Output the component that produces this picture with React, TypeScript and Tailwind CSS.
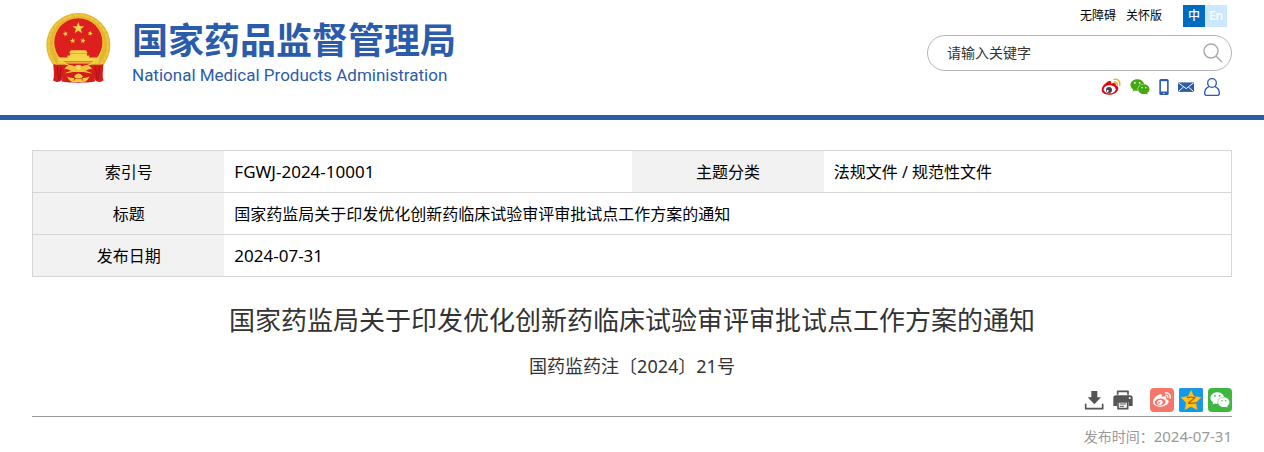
import type { ReactNode } from 'react';
import { FaWeibo, FaWeixin } from 'react-icons/fa';

type IconLink = {
  label: string;
  icon: ReactNode;
};

const NOTICE_TITLE = '国家药监局关于印发优化创新药临床试验审评审批试点工作方案的通知';

const STAR = 'M0 -10 L2.4 -3.2 L9.5 -3.1 L3.9 1.2 L5.9 8.1 L0 4 L-5.9 8.1 L-3.9 1.2 L-9.5 -3.1 L-2.4 -3.2 Z';

function Emblem() {
  return (
    <svg viewBox="45 38 201 212" className="h-[70px] w-[67px] shrink-0" role="img" aria-label="国徽">
      <circle cx="145" cy="135" r="97" fill="#e5b52d" />
      <circle cx="145" cy="135" r="90" fill="none" stroke="#efc843" strokeWidth="6" strokeDasharray="14 3" />
      <circle cx="145" cy="129" r="76" fill="#f2ca3f" />
      <circle cx="145" cy="127" r="73" fill="#dd1f1d" />
      <g fill="#f6d34a">
        <path d={STAR} transform="translate(145 84) scale(1.9)" />
        <path d={STAR} transform="translate(106 101) rotate(-15) scale(.85)" />
        <path d={STAR} transform="translate(181 100) rotate(15) scale(.85)" />
        <path d={STAR} transform="translate(128 122) rotate(-8) scale(.9)" />
        <path d={STAR} transform="translate(159 122) rotate(8) scale(.9)" />
        <path d="M122 151h46l5 8h-56zM120 160h51v9h-51zM112 167h66v6h-66zM84 173h123v12H84zM80 187h130l-5 4H85z" />
      </g>
      <path d="M69 193c22 4 36-2 47 5l17 10-28 12-10 20c-9 10-21 7-27 2 5-9 3-23 1-49z" fill="#d51b1b" />
      <path d="M221 193c-22 4-36-2-47 5l-17 10 28 12 10 20c9 10 21 7 27 2-5-9-3-23-1-49z" fill="#d51b1b" />
      <path d="M101 222l34-6h20l34 6 7 23c-16 4-29 4-51 4s-35 0-51-4z" fill="#d51b1b" />
      <path d="M82 199q-2 20 4 43M94 201q-5 13-4 38M208 199q2 20-4 43M196 201q5 13 4 38" fill="none" stroke="#a81014" strokeWidth="3" />
      <path d="M102 209c9-15 23-17 32-7 2-10 20-10 22 0 9-10 23-8 32 7-14-5-19 8-32 8h-22c-13 0-18-13-32-8z" fill="#edc33b" />
      <circle cx="145" cy="203" r="7" fill="#f7dc62" />
      <path d="M132 230q13-18 27 0l-6 6h-15zM111 230q14 6 22 5l-4 12q-11-1-18-17zM179 230q-14 6-22 5l4 12q11-1 18-17zM135 238h20l6 9h-32z" fill="#f1c93f" />
    </svg>
  );
}

function WeiboColorIcon() {
  return (
    <svg viewBox="34 20 60 54" className="h-[18px] w-5">
      <path d="M57 30c5-3 10-1 7 7 8-4 17-3 14 5 8 3 9 8 7 13-4 10-15 15-27 15-13 0-22-6-22-14C36 46 48 34 57 30z" fill="#e60012" />
      <ellipse cx="60" cy="54" rx="18" ry="12" fill="#fff" />
      <circle cx="58" cy="56" r="9" fill="#444" />
      <circle cx="54" cy="59" r="3" fill="#fff" />
      <path d="M73 24c11-3 20 6 17 18M73 32c6-1 11 3 10 9" fill="none" stroke="#eaa91c" strokeWidth="4" strokeLinecap="round" />
    </svg>
  );
}

function PhoneIcon() {
  return (
    <svg viewBox="203 18 31 54" className="h-[18px] w-[10px]">
      <rect x="204" y="20" width="29" height="50" rx="5" fill="#2b5caa" />
      <path d="M209 27h19v32h-19z" fill="#fff" />
      <circle cx="218" cy="65" r="2" fill="#fff" />
    </svg>
  );
}

function MailIcon() {
  return (
    <svg viewBox="260 18 49 54" className="h-[18px] w-4">
      <path d="M260 31h49v29h-49z" fill="#2b5caa" />
      <path d="M261 32l24 18 23-18M261 59l16-14M308 59l-16-14" fill="none" stroke="#fff" strokeWidth="3" />
    </svg>
  );
}

function UserIcon() {
  return (
    <svg viewBox="339 17 54 54" className="h-[18px] w-[18px]" fill="none" stroke="#2b5caa" strokeWidth="4">
      <circle cx="366" cy="32" r="13" />
      <path d="M357 43c-9 4-13 12-13 20 0 5 2 6 5 6h34c3 0 5-1 5-6 0-8-4-16-13-20" />
    </svg>
  );
}

function DownloadIcon() {
  return (
    <svg viewBox="42 29 60 60" className="h-5 w-5" fill="#555">
      <path d="M64 32h18v19h11L73 72 53 51h11z" />
      <path d="M47 72v13h51V72" fill="none" stroke="#555" strokeWidth="5" strokeLinecap="round" strokeLinejoin="round" />
    </svg>
  );
}

function PrintIcon() {
  return (
    <svg viewBox="131 31 60 60" className="h-5 w-5">
      <path d="M145 45V35h31v10" fill="none" stroke="#555" strokeWidth="5" strokeLinejoin="round" />
      <path d="M139 47h43q8 0 8 8v24h-12V67h-35v12h-11V55q0-8 7-8z" fill="#555" />
      <circle cx="181" cy="55" r="3" fill="#fff" />
      <path d="M146 67h29v20h-29z" fill="#fff" stroke="#555" strokeWidth="5" strokeLinejoin="round" />
      <path d="M151 73h19M151 80h13" stroke="#555" strokeWidth="3" />
    </svg>
  );
}

function QzoneIcon() {
  return (
    <svg viewBox="0 0 72 72" className="h-6 w-6">
      <rect x="1" y="1" width="70" height="70" rx="4" fill="#0c9bef" stroke="#0879c9" strokeWidth="2" />
      <path
        d="M36 6l9 19 22 3-16 16 4 22-19-10-19 10 4-22L5 28l22-3z"
        fill="#fdc51c"
        stroke="#e88b0e"
        strokeWidth="1"
        strokeLinejoin="round"
      />
      <path d="M24 29c9-2 16-2 24 0L28 45c8 2 15 2 24-1" fill="none" stroke="#c65d08" strokeWidth="4" strokeLinejoin="round" />
    </svg>
  );
}

const HEADER_LINKS: IconLink[] = [
  { label: '微博', icon: <WeiboColorIcon /> },
  { label: '微信', icon: <FaWeixin className="h-[18px] w-5 text-[#45a813]" /> },
  { label: '手机', icon: <PhoneIcon /> },
  { label: '邮箱', icon: <MailIcon /> },
  { label: '用户', icon: <UserIcon /> },
];

function Header() {
  return (
    <header className="flex items-start justify-between border-b-[5px] border-[#2b5caa] pr-8 pb-[19px] pl-[45px]">
      <a href="#" className="flex gap-5 pt-[13px] text-[#2b5caa]">
        <Emblem />
        <span className="flex flex-col pt-1">
          <span className="text-[36px] leading-[48px] font-bold whitespace-nowrap">国家药品监督管理局</span>
          <span className="font-['Roboto',sans-serif] text-[17px] leading-5 whitespace-nowrap">
            National Medical Products Administration
          </span>
        </span>
      </a>

      <div className="flex w-[305px] flex-col pt-[5px]">
        <nav className="flex items-center justify-end pr-[5px] text-xs leading-[22px]">
          <a href="#" className="mr-[10px]">无障碍</a>
          <a href="#" className="mr-[21px]">关怀版</a>
          <a href="#" className="h-[22px] w-[22px] bg-[#006cbf] text-center font-medium text-white">中</a>
          <a href="#" className="h-[22px] w-[22px] bg-[#cce8ff] text-center font-medium text-white">En</a>
        </nav>
        <form className="mt-2 flex h-9 items-center rounded-full border border-[#b5b5b5] pr-2 pl-[19px]" onSubmit={event => event.preventDefault()}>
          <input
            type="text"
            aria-label="搜索"
            placeholder="请输入关键字"
            className="min-w-0 flex-1 text-sm outline-none placeholder:text-[#333]"
          />
          <button type="submit" aria-label="搜索">
            <svg viewBox="0 0 40 40" className="h-5 w-5" fill="none" stroke="#aaa" strokeWidth="3">
              <circle cx="16" cy="16" r="14" />
              <path d="M26 26l12 12" />
            </svg>
          </button>
        </form>
        <div className="mt-[7px] flex items-center justify-end gap-[9px] pr-[11px]">
          {HEADER_LINKS.map(link => (
            <a key={link.label} href="#" aria-label={link.label}>
              {link.icon}
            </a>
          ))}
        </div>
      </div>
    </header>
  );
}

function InfoTable() {
  const labelClass = 'w-[16%] bg-[#f2f2f2] text-center font-normal';
  const valueClass = 'px-[10px]';

  return (
    <table className="w-full table-fixed border-collapse border border-[#d6d6d6] text-base leading-6">
      <tbody>
        <tr className="h-[42px] border-b border-[#d6d6d6]">
          <th scope="row" className={labelClass}>索引号</th>
          <td className={`w-[34%] text-[17px] ${valueClass}`}>FGWJ-2024-10001</td>
          <th scope="row" className={labelClass}>主题分类</th>
          <td className={valueClass}>法规文件 / 规范性文件</td>
        </tr>
        <tr className="h-[42px] border-b border-[#d6d6d6]">
          <th scope="row" className={labelClass}>标题</th>
          <td colSpan={3} className={valueClass}>{NOTICE_TITLE}</td>
        </tr>
        <tr className="h-[42px]">
          <th scope="row" className={labelClass}>发布日期</th>
          <td colSpan={3} className={`text-[17px] ${valueClass}`}>2024-07-31</td>
        </tr>
      </tbody>
    </table>
  );
}

function Toolbar() {
  return (
    <div className="flex items-center justify-end border-b border-[#999] pb-1">
      <button type="button" aria-label="下载" className="mr-[9px]">
        <DownloadIcon />
      </button>
      <button type="button" aria-label="打印" className="mr-[17px]">
        <PrintIcon />
      </button>
      <div className="flex gap-[5px]">
        <a href="#" aria-label="分享到微博" className="flex h-6 w-6 items-center justify-center rounded-sm bg-[#f47769] text-white">
          <FaWeibo className="h-[18px] w-[18px]" />
        </a>
        <a href="#" aria-label="分享到空间">
          <QzoneIcon />
        </a>
        <a href="#" aria-label="分享到微信" className="flex h-6 w-6 items-center justify-center rounded-sm bg-[#3cb83f] text-white">
          <FaWeixin className="h-5 w-5" />
        </a>
      </div>
    </div>
  );
}

export default function App() {
  return (
    <div className="bg-white font-['Noto_Sans','Noto_Sans_CJK_SC',sans-serif] text-black">
      <Header />
      <main className="px-8 pt-[30px]">
        <InfoTable />
        <h1 className="mt-[23px] text-center text-[26px] leading-10 text-[#333]">{NOTICE_TITLE}</h1>
        <p className="mt-3 mb-2 text-center text-lg leading-7 text-[#333]">国药监药注〔2024〕21号</p>
        <Toolbar />
        <p className="mt-[7px] text-right text-sm leading-6 text-[#999]">
          发布时间：<time dateTime="2024-07-31" className="text-[15px]">2024-07-31</time>
        </p>
      </main>
    </div>
  );
}
